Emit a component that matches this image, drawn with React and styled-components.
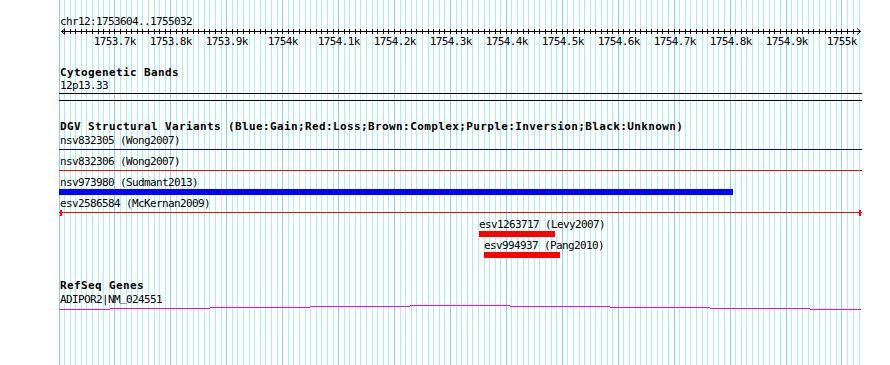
import React from "react";
import styled, { createGlobalStyle } from "styled-components";

// page x of the first grid line, and the width of the track panel
const LEFT = 59;
const WIDTH = 803;
// one 10 bp step on screen
const STEP = 5.5925;

const gridX = Array.from({ length: 144 }, (_, i) =>
  i === 143 ? 800 : Math.floor(i * STEP)
);

const gridSvg = `<svg xmlns="http://www.w3.org/2000/svg" width="${WIDTH}" height="10" shape-rendering="crispEdges">${gridX
  .map(
    (x, i) =>
      `<rect x="${x}" y="0" width="1" height="10" fill="${
        i % 10 === 0 ? "#87cefa" : "#afeeee"
      }"/>`
  )
  .join("")}</svg>`;
const gridUrl = `url("data:image/svg+xml,${encodeURIComponent(gridSvg)}")`;

const GlobalStyle = createGlobalStyle`
  html, body {
    margin: 0;
    background: #fff;
    overflow: hidden;
  }
  body {
    font-family: "DejaVu Sans Mono", "Liberation Mono", monospace;
    color: #000;
  }
`;

const Canvas = styled.div`
  margin-left: ${LEFT}px;
  width: ${WIDTH}px;
  height: 365px;
  background: ${gridUrl} repeat-y;
  display: flex;
  flex-direction: column;
`;

const SmallText = styled.div`
  font: 11px/13px "DejaVu Sans Mono", "Liberation Mono", monospace;
  letter-spacing: -0.62px;
  height: 12px;
  padding-left: ${(p) => (p.$inset === undefined ? 1 : p.$inset)}px;
  margin-top: ${(p) => p.$gap || 0}px;
  white-space: nowrap;
`;

// the underscore of the bitmap font sits on the baseline
const Underscore = styled.span`
  display: inline-block;
  vertical-align: 2px;
  line-height: 9px;
`;

const TrackTitle = styled.div`
  font: bold 11px/12px "DejaVu Sans Mono", "Liberation Mono", monospace;
  letter-spacing: 0.38px;
  height: 12px;
  padding-left: 1px;
  margin-top: ${(p) => p.$gap}px;
  white-space: nowrap;
`;

const RulerSvg = styled.svg`
  display: block;
  shape-rendering: crispEdges;
  text {
    font: 11px "DejaVu Sans Mono", "Liberation Mono", monospace;
    letter-spacing: -0.62px;
    shape-rendering: auto;
  }
`;

const BandBox = styled.div`
  box-sizing: border-box;
  width: ${WIDTH}px;
  height: 8px;
  margin-top: 2px;
  border-top: 1px solid #000;
  border-bottom: 1px solid #000;
`;

const TrackBody = styled.div`
  display: flex;
  flex-direction: column;
  margin-top: 1px;
`;

const FeatureRow = styled.div`
  display: flex;
  flex-direction: column;
  align-items: flex-start;
  height: 21px;
`;

const GlyphSlot = styled.div`
  display: flex;
  align-items: flex-start;
  height: 6px;
  margin-top: 1px;
`;

const Bar = styled.div`
  height: 6px;
  width: 100%;
  background: ${(p) => p.$color};
`;

const Rule = styled.div`
  height: 1px;
  margin-top: 2px;
  flex: ${(p) => (p.$w ? `0 0 ${p.$w}px` : "1 1 auto")};
  background: ${(p) => p.$color};
`;

const Cap = styled.div`
  flex: 0 0 2px;
  height: 6px;
  background: ${(p) => p.$color};
`;

const GeneSvg = styled.svg`
  display: block;
  shape-rendering: crispEdges;
`;

const variants = [
  { label: "nsv832305 (Wong2007)", x: 59, w: 803, color: "#0000b4", type: "line" },
  { label: "nsv832306 (Wong2007)", x: 59, w: 803, color: "#ff0000", type: "line" },
  { label: "nsv973980 (Sudmant2013)", x: 59, w: 674, color: "#0000ff", type: "bar" },
  { label: "esv2586584 (McKernan2009)", x: 59, w: 803, color: "#ff0000", type: "clipped" },
  { label: "esv1263717 (Levy2007)", x: 479, w: 76, color: "#ff0000", type: "bar" },
  { label: "esv994937 (Pang2010)", x: 484, w: 76, color: "#ff0000", type: "bar" },
];

// local x ranges and y of the flat gene model line
const geneSteps = [
  [0, 51, 4],
  [51, 151, 3],
  [151, 251, 2],
  [251, 351, 1],
  [351, 451, 0],
  [451, 551, 1],
  [551, 651, 2],
  [651, 751, 3],
  [751, 802, 4],
];

const tickLabel = (i) => {
  const n = 17536 + i / 10;
  return n % 10 === 0 ? `${n / 10}k` : `${Math.floor(n / 10)}.${n % 10}k`;
};

const Ruler = () => (
  <RulerSvg width={WIDTH} height={21} viewBox={`0 0 ${WIDTH} 21`}>
    <line x1={2} y1={4.5} x2={802} y2={4.5} stroke="#000" />
    <path
      d="M6 1.5 L2.5 4.5 L6 7.5 M798 1.5 L801.5 4.5 L798 7.5"
      fill="none"
      stroke="#000"
      shapeRendering="auto"
    />
    {gridX.slice(1, 143).map((x) => (
      <line key={x} x1={x + 0.5} x2={x + 0.5} y1={2} y2={7} stroke="#000" />
    ))}
    {gridX.map((x, i) =>
      i > 0 && i % 10 === 0 ? (
        <text key={i} x={x + 0.8} y={18} textAnchor="middle" fill="#000">
          {tickLabel(i)}
        </text>
      ) : null
    )}
  </RulerSvg>
);

const Glyph = ({ type, color }) => {
  if (type === "bar") return <Bar $color={color} />;
  if (type === "clipped")
    return (
      <>
        <Rule $w={1} $color={color} />
        <Cap $color={color} />
        <Rule $color={color} />
        <Cap $color={color} />
        <Rule $w={1} $color={color} />
      </>
    );
  return <Rule $color={color} />;
};

const Feature = ({ label, x, w, color, type }) => (
  <FeatureRow style={{ marginLeft: x - LEFT }}>
    <SmallText $inset={x === LEFT ? 1 : 0}>{label}</SmallText>
    <GlyphSlot style={{ width: w }}>
      <Glyph type={type} color={color} />
    </GlyphSlot>
  </FeatureRow>
);

export default function App() {
  return (
    <>
      <GlobalStyle />
      <Canvas>
        <SmallText $gap={15}>chr12:1753604..1755032</SmallText>
        <Ruler />

        <TrackTitle $gap={19}>Cytogenetic Bands</TrackTitle>
        <SmallText>12p13.33</SmallText>
        <BandBox />

        <TrackTitle $gap={20}>
          DGV Structural Variants (Blue:Gain;Red:Loss;Brown:Complex;Purple:Inversion;Black:Unknown)
        </TrackTitle>
        <TrackBody>
          {variants.map((v) => (
            <Feature key={v.label} {...v} />
          ))}
        </TrackBody>

        <TrackTitle $gap={20}>RefSeq Genes</TrackTitle>
        <SmallText $gap={1}>
          ADIPOR2|NM<Underscore>_</Underscore>024551
        </SmallText>
        <GeneSvg width={WIDTH} height={5} viewBox={`0 0 ${WIDTH} 5`}>
          {geneSteps.map(([a, b, y]) => (
            <rect key={a} x={a} y={y} width={b - a} height={1} fill="#ff00ff" />
          ))}
        </GeneSvg>
      </Canvas>
    </>
  );
}
